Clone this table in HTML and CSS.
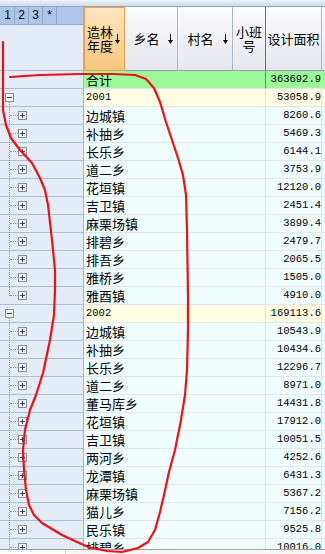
FILE: index.html
```html
<!DOCTYPE html>
<html lang="zh">
<head>
<meta charset="utf-8">
<title>设计面积</title>
<link rel="stylesheet" href="styles.css">
</head>
<body>
<div class="app">
  <div class="topbar"></div>
  <div class="head">
    <div class="rh-head">
      <div class="levels"><span>1</span><span>2</span><span>3</span><span>*</span></div>
      <div class="rh-blank"></div>
    </div>
    <div class="col c1 sorted"><span class="lbl">造林<br>年度</span><svg class="arr" width="5" height="10" viewBox="0 0 5 10"><path d="M2.5 0v7" stroke="#000" stroke-width="1"/><path d="M0 6h5l-2.5 4z" fill="#000"/></svg></div>
    <div class="col c2"><span class="lbl">乡名</span><svg class="arr" width="5" height="10" viewBox="0 0 5 10"><path d="M2.5 0v7" stroke="#000" stroke-width="1"/><path d="M0 6h5l-2.5 4z" fill="#000"/></svg></div>
    <div class="col c3"><span class="lbl">村名</span><svg class="arr" width="5" height="10" viewBox="0 0 5 10"><path d="M2.5 0v7" stroke="#000" stroke-width="1"/><path d="M0 6h5l-2.5 4z" fill="#000"/></svg></div>
    <div class="col c4"><span class="lbl">小班<br>号</span></div>
    <div class="col c5"><span class="lbl">设计面积</span></div>
    <div class="col c6"></div>
  </div>
  <div class="body">
    <div class="row total"><div class="rh"></div><div class="name">合计</div><div class="val">363692.9</div><div class="extra"></div></div>

    <div class="row group"><div class="rh"><svg class="box" width="9" height="9" viewBox="0 0 9 9"><rect x=".5" y=".5" width="8" height="8" fill="#f7f7f7" stroke="#8d8d8d"/><path d="M2 4.5h5" stroke="#23408a"/></svg></div><div class="name mono">2001</div><div class="val">53058.9</div><div class="extra"></div></div>
    <div class="row child"><div class="rh"><span class="tree"></span><svg class="box" width="9" height="9" viewBox="0 0 9 9"><rect x=".5" y=".5" width="8" height="8" fill="#f7f7f7" stroke="#8d8d8d"/><path d="M2 4.5h5M4.5 2v5" stroke="#23408a"/></svg></div><div class="name">边城镇</div><div class="val">8260.6</div><div class="extra"></div></div>
    <div class="row child"><div class="rh"><span class="tree"></span><svg class="box" width="9" height="9" viewBox="0 0 9 9"><rect x=".5" y=".5" width="8" height="8" fill="#f7f7f7" stroke="#8d8d8d"/><path d="M2 4.5h5M4.5 2v5" stroke="#23408a"/></svg></div><div class="name">补抽乡</div><div class="val">5469.3</div><div class="extra"></div></div>
    <div class="row child"><div class="rh"><span class="tree"></span><svg class="box" width="9" height="9" viewBox="0 0 9 9"><rect x=".5" y=".5" width="8" height="8" fill="#f7f7f7" stroke="#8d8d8d"/><path d="M2 4.5h5M4.5 2v5" stroke="#23408a"/></svg></div><div class="name">长乐乡</div><div class="val">6144.1</div><div class="extra"></div></div>
    <div class="row child"><div class="rh"><span class="tree"></span><svg class="box" width="9" height="9" viewBox="0 0 9 9"><rect x=".5" y=".5" width="8" height="8" fill="#f7f7f7" stroke="#8d8d8d"/><path d="M2 4.5h5M4.5 2v5" stroke="#23408a"/></svg></div><div class="name">道二乡</div><div class="val">3753.9</div><div class="extra"></div></div>
    <div class="row child"><div class="rh"><span class="tree"></span><svg class="box" width="9" height="9" viewBox="0 0 9 9"><rect x=".5" y=".5" width="8" height="8" fill="#f7f7f7" stroke="#8d8d8d"/><path d="M2 4.5h5M4.5 2v5" stroke="#23408a"/></svg></div><div class="name">花垣镇</div><div class="val">12120.0</div><div class="extra"></div></div>
    <div class="row child"><div class="rh"><span class="tree"></span><svg class="box" width="9" height="9" viewBox="0 0 9 9"><rect x=".5" y=".5" width="8" height="8" fill="#f7f7f7" stroke="#8d8d8d"/><path d="M2 4.5h5M4.5 2v5" stroke="#23408a"/></svg></div><div class="name">吉卫镇</div><div class="val">2451.4</div><div class="extra"></div></div>
    <div class="row child"><div class="rh"><span class="tree"></span><svg class="box" width="9" height="9" viewBox="0 0 9 9"><rect x=".5" y=".5" width="8" height="8" fill="#f7f7f7" stroke="#8d8d8d"/><path d="M2 4.5h5M4.5 2v5" stroke="#23408a"/></svg></div><div class="name">麻栗场镇</div><div class="val">3899.4</div><div class="extra"></div></div>
    <div class="row child"><div class="rh"><span class="tree"></span><svg class="box" width="9" height="9" viewBox="0 0 9 9"><rect x=".5" y=".5" width="8" height="8" fill="#f7f7f7" stroke="#8d8d8d"/><path d="M2 4.5h5M4.5 2v5" stroke="#23408a"/></svg></div><div class="name">排碧乡</div><div class="val">2479.7</div><div class="extra"></div></div>
    <div class="row child"><div class="rh"><span class="tree"></span><svg class="box" width="9" height="9" viewBox="0 0 9 9"><rect x=".5" y=".5" width="8" height="8" fill="#f7f7f7" stroke="#8d8d8d"/><path d="M2 4.5h5M4.5 2v5" stroke="#23408a"/></svg></div><div class="name">排吾乡</div><div class="val">2065.5</div><div class="extra"></div></div>
    <div class="row child"><div class="rh"><span class="tree"></span><svg class="box" width="9" height="9" viewBox="0 0 9 9"><rect x=".5" y=".5" width="8" height="8" fill="#f7f7f7" stroke="#8d8d8d"/><path d="M2 4.5h5M4.5 2v5" stroke="#23408a"/></svg></div><div class="name">雅桥乡</div><div class="val">1505.0</div><div class="extra"></div></div>
    <div class="row child last"><div class="rh"><span class="tree"></span><svg class="box" width="9" height="9" viewBox="0 0 9 9"><rect x=".5" y=".5" width="8" height="8" fill="#f7f7f7" stroke="#8d8d8d"/><path d="M2 4.5h5M4.5 2v5" stroke="#23408a"/></svg></div><div class="name">雅酉镇</div><div class="val">4910.0</div><div class="extra"></div></div>

    <div class="row group"><div class="rh"><svg class="box" width="9" height="9" viewBox="0 0 9 9"><rect x=".5" y=".5" width="8" height="8" fill="#f7f7f7" stroke="#8d8d8d"/><path d="M2 4.5h5" stroke="#23408a"/></svg></div><div class="name mono">2002</div><div class="val">169113.6</div><div class="extra"></div></div>
    <div class="row child"><div class="rh"><span class="tree"></span><svg class="box" width="9" height="9" viewBox="0 0 9 9"><rect x=".5" y=".5" width="8" height="8" fill="#f7f7f7" stroke="#8d8d8d"/><path d="M2 4.5h5M4.5 2v5" stroke="#23408a"/></svg></div><div class="name">边城镇</div><div class="val">10543.9</div><div class="extra"></div></div>
    <div class="row child"><div class="rh"><span class="tree"></span><svg class="box" width="9" height="9" viewBox="0 0 9 9"><rect x=".5" y=".5" width="8" height="8" fill="#f7f7f7" stroke="#8d8d8d"/><path d="M2 4.5h5M4.5 2v5" stroke="#23408a"/></svg></div><div class="name">补抽乡</div><div class="val">10434.6</div><div class="extra"></div></div>
    <div class="row child"><div class="rh"><span class="tree"></span><svg class="box" width="9" height="9" viewBox="0 0 9 9"><rect x=".5" y=".5" width="8" height="8" fill="#f7f7f7" stroke="#8d8d8d"/><path d="M2 4.5h5M4.5 2v5" stroke="#23408a"/></svg></div><div class="name">长乐乡</div><div class="val">12296.7</div><div class="extra"></div></div>
    <div class="row child"><div class="rh"><span class="tree"></span><svg class="box" width="9" height="9" viewBox="0 0 9 9"><rect x=".5" y=".5" width="8" height="8" fill="#f7f7f7" stroke="#8d8d8d"/><path d="M2 4.5h5M4.5 2v5" stroke="#23408a"/></svg></div><div class="name">道二乡</div><div class="val">8971.0</div><div class="extra"></div></div>
    <div class="row child"><div class="rh"><span class="tree"></span><svg class="box" width="9" height="9" viewBox="0 0 9 9"><rect x=".5" y=".5" width="8" height="8" fill="#f7f7f7" stroke="#8d8d8d"/><path d="M2 4.5h5M4.5 2v5" stroke="#23408a"/></svg></div><div class="name">董马库乡</div><div class="val">14431.8</div><div class="extra"></div></div>
    <div class="row child"><div class="rh"><span class="tree"></span><svg class="box" width="9" height="9" viewBox="0 0 9 9"><rect x=".5" y=".5" width="8" height="8" fill="#f7f7f7" stroke="#8d8d8d"/><path d="M2 4.5h5M4.5 2v5" stroke="#23408a"/></svg></div><div class="name">花垣镇</div><div class="val">17912.0</div><div class="extra"></div></div>
    <div class="row child"><div class="rh"><span class="tree"></span><svg class="box" width="9" height="9" viewBox="0 0 9 9"><rect x=".5" y=".5" width="8" height="8" fill="#f7f7f7" stroke="#8d8d8d"/><path d="M2 4.5h5M4.5 2v5" stroke="#23408a"/></svg></div><div class="name">吉卫镇</div><div class="val">10051.5</div><div class="extra"></div></div>
    <div class="row child"><div class="rh"><span class="tree"></span><svg class="box" width="9" height="9" viewBox="0 0 9 9"><rect x=".5" y=".5" width="8" height="8" fill="#f7f7f7" stroke="#8d8d8d"/><path d="M2 4.5h5M4.5 2v5" stroke="#23408a"/></svg></div><div class="name">两河乡</div><div class="val">4252.6</div><div class="extra"></div></div>
    <div class="row child"><div class="rh"><span class="tree"></span><svg class="box" width="9" height="9" viewBox="0 0 9 9"><rect x=".5" y=".5" width="8" height="8" fill="#f7f7f7" stroke="#8d8d8d"/><path d="M2 4.5h5M4.5 2v5" stroke="#23408a"/></svg></div><div class="name">龙潭镇</div><div class="val">6431.3</div><div class="extra"></div></div>
    <div class="row child"><div class="rh"><span class="tree"></span><svg class="box" width="9" height="9" viewBox="0 0 9 9"><rect x=".5" y=".5" width="8" height="8" fill="#f7f7f7" stroke="#8d8d8d"/><path d="M2 4.5h5M4.5 2v5" stroke="#23408a"/></svg></div><div class="name">麻栗场镇</div><div class="val">5367.2</div><div class="extra"></div></div>
    <div class="row child"><div class="rh"><span class="tree"></span><svg class="box" width="9" height="9" viewBox="0 0 9 9"><rect x=".5" y=".5" width="8" height="8" fill="#f7f7f7" stroke="#8d8d8d"/><path d="M2 4.5h5M4.5 2v5" stroke="#23408a"/></svg></div><div class="name">猫儿乡</div><div class="val">7156.2</div><div class="extra"></div></div>
    <div class="row child"><div class="rh"><span class="tree"></span><svg class="box" width="9" height="9" viewBox="0 0 9 9"><rect x=".5" y=".5" width="8" height="8" fill="#f7f7f7" stroke="#8d8d8d"/><path d="M2 4.5h5M4.5 2v5" stroke="#23408a"/></svg></div><div class="name">民乐镇</div><div class="val">9525.8</div><div class="extra"></div></div>
    <div class="row child"><div class="rh"><span class="tree"></span><svg class="box" width="9" height="9" viewBox="0 0 9 9"><rect x=".5" y=".5" width="8" height="8" fill="#f7f7f7" stroke="#8d8d8d"/><path d="M2 4.5h5M4.5 2v5" stroke="#23408a"/></svg></div><div class="name">排碧乡</div><div class="val">10016.0</div><div class="extra"></div></div>
  </div>
  <div class="hscroll"><div class="hs-left"></div><div class="hs-thumb"></div></div>
  <svg class="ink" width="325" height="554" viewBox="0 0 325 554">
    <polyline fill="none" stroke="#f01010" stroke-width="2.2" stroke-linejoin="round" stroke-linecap="round"
      points="3,42 3,80 3,110 6,125 11,138 20,150 32,163 40,178 45,190 48,205 52,240 55,270 55,290 54,315 50,340 43,373 36,395 30,410 25,430 23,450 24,470 26,490 29,505 34,515 42,523 52,529 62,535 75,541 88,547 107,551 122,552 138,548 148,542 155,530 160,512 164,495 169,472 175,450 181,420 185,395 187,370 188,330 188,295 187,230 186,195 183,175 178,158 172,140 166,122 160,102 154,88 146,79 135,75 113,74 80,74 40,75 10,77"/>
  </svg>
</div>
</body>
</html>
```
FILE: styles.css
```css
html, body {
  margin: 0;
  padding: 0;
  background: #ffffff;
}

.app {
  position: relative;
  width: 325px;
  height: 554px;
  overflow: hidden;
  background: #ffffff;
  font-family: "Noto Sans CJK SC", "Noto Sans", sans-serif;
  font-size: 13px;
  color: #000;
}

.topbar {
  height: 6px;
  background: linear-gradient(#eef3f9, #cfdbea);
  border-bottom: 1px solid #8ea6c4;
}

.head {
  display: flex;
  height: 64px;
  box-sizing: border-box;
}

.rh-head {
  width: 84px;
  flex: none;
  display: flex;
  flex-direction: column;
  box-sizing: border-box;
  border-right: 1px solid #9fb6d3;
}

.levels {
  height: 18px;
  box-sizing: border-box;
  display: flex;
  background: #adc6ea;
  border-bottom: 1px solid #8ea6c6;
  padding-left: 1px;
}

.levels span {
  width: 13px;
  border-right: 1px solid #8ea6c6;
  font-family: "Liberation Sans", Arial, sans-serif;
  font-size: 12px;
  line-height: 17px;
  text-align: center;
}

.rh-blank {
  flex: 1;
  background: #e3ebf7;
  border-bottom: 1px solid #a3bad6;
}

.col {
  flex: none;
  display: flex;
  align-items: center;
  box-sizing: border-box;
  background: linear-gradient(#fbfbfd, #e6e8ee);
  border-right: 1px solid #a9b6c8;
  border-bottom: 1px solid #8e9fb6;
  line-height: 14px;
}

.col .lbl {
  flex: 1;
  text-align: center;
}

.col .arr {
  flex: none;
  margin-right: 4px;
}

.c1 { width: 41px; }
.c2 { width: 53px; }
.c3 { width: 55px; }
.c4 { width: 33px; border-right-color: #6e6e6e; }
.c5 { width: 56px; border-right-color: #a9b6c8; }
.c6 { flex: 1; border-right: none; }

.col.sorted {
  background: linear-gradient(#fde6c0, #f7c57c);
  border: 1px solid #e8a04c;
}

.body {
  height: 478px;
  overflow: hidden;
}

.row {
  display: flex;
  height: 18px;
}

.row > div {
  box-sizing: border-box;
  height: 18px;
}

.rh {
  position: relative;
  width: 84px;
  flex: none;
  display: flex;
  align-items: center;
  background: #e4ecf7;
  border-right: 1px solid #9fb6d3;
  border-bottom: 1px solid #a8bed8;
}

.row.group .rh { padding-left: 5px; }
.row.child .rh { padding-left: 18px; }

.box { display: block; position: relative; }

.row.group .rh::after {
  content: "";
  position: absolute;
  left: 9px;
  top: 13px;
  bottom: -1px;
  border-left: 1px dotted #8a97a8;
}

.tree::before {
  content: "";
  position: absolute;
  left: 9px;
  top: -1px;
  bottom: -1px;
  border-left: 1px dotted #8a97a8;
}

.row.child.last .tree::before {
  bottom: 8px;
}

.tree::after {
  content: "";
  position: absolute;
  left: 10px;
  top: 8px;
  width: 8px;
  border-top: 1px dotted #8a97a8;
}

.name {
  width: 182px;
  flex: none;
  padding-left: 2px;
  line-height: 17px;
  border-right: 1px solid #dde3e8;
  border-bottom: 1px solid #e3e7ea;
  white-space: nowrap;
}

.mono {
  font-family: "Liberation Mono", "DejaVu Sans Mono", monospace;
  font-size: 10.5px;
}

.val {
  width: 56px;
  flex: none;
  text-align: right;
  font-family: "Liberation Mono", "DejaVu Sans Mono", monospace;
  font-size: 10.5px;
  line-height: 17px;
  border-right: 1px solid #d9dfe5;
  border-bottom: 1px solid #e3e7ea;
}

.extra {
  flex: 1;
  border-bottom: 1px solid #e3e7ea;
}

.row.total .name,
.row.total .val,
.row.total .extra { background: #9cf99a; }
.row.total .name { border-right-color: #7c7c7c; }

.row.group .name,
.row.group .val,
.row.group .extra { background: #fffde4; }

.row.child .name,
.row.child .val,
.row.child .extra { background: #f0feff; }

.hscroll {
  display: flex;
  height: 5px;
  border-top: 1px solid #a0a0a0;
  background: #ffffff;
}

.hs-left {
  width: 65px;
  border-right: 1px solid #d4d4d4;
}

.hs-thumb {
  flex: 1;
  background: #f7f7f7;
}

.ink {
  position: absolute;
  left: 0;
  top: 0;
  pointer-events: none;
}
```
